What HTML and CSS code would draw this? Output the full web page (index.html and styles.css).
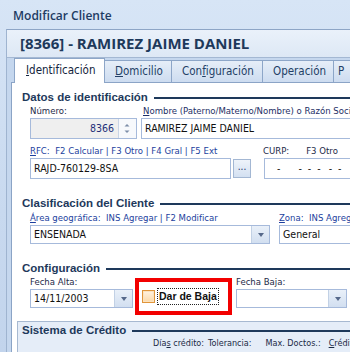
FILE: index.html
```html
<!DOCTYPE html>
<html lang="es">
<head>
    <meta charset="UTF-8">
    <title>Modificar Cliente</title>
    <link rel="stylesheet" href="styles.css">
</head>
<body>

<div class="caption">Modificar Cliente</div>

<div class="frame">
    <div class="record">[8366] - RAMIREZ JAIME DANIEL</div>

    <div class="sheet">
        <div class="tabs">
            <div class="tab active tab-id"><u>I</u>dentificación</div>
            <div class="tab tab-dom"><u>D</u>omicilio</div>
            <div class="tab tab-conf">Con<u>f</u>iguración</div>
            <div class="tab tab-op">Operación</div>
            <div class="tab tab-p">P</div>
        </div>

        <div class="page">
            <!-- Datos de identificacion -->
            <div class="group">
                <div class="group-title">Datos de identificación</div>
                <div class="group-body">
                    <div class="row">
                        <div class="field f-num">
                            <div class="label">Número:</div>
                            <div class="spin">
                                <div class="spin-value">8366</div>
                                <div class="spin-btn">
                                    <svg width="16" height="19" viewBox="0 0 16 19">
                                        <path d="M5.5 7.5 L8 5 L10.5 7.5 Z" fill="#7d8ea8"/>
                                        <path d="M5.5 11.5 L8 14 L10.5 11.5 Z" fill="#7d8ea8"/>
                                    </svg>
                                </div>
                            </div>
                        </div>
                        <div class="field f-name">
                            <div class="label navy"><u>N</u>ombre (Paterno/Materno/Nombre) o Razón Social</div>
                            <div class="edit">RAMIREZ JAIME DANIEL</div>
                        </div>
                    </div>
                    <div class="row row-next">
                        <div class="field f-rfc">
                            <div class="label link"><u>R</u>FC:&nbsp; F2 Calcular | F3 Otro | F4 Gral | F5 Ext</div>
                            <div class="edit">RAJD-760129-8SA</div>
                        </div>
                        <div class="dots">...</div>
                        <div class="field f-curp">
                            <div class="label"><span class="curp">CURP:</span>F3 Otro</div>
                            <div class="edit mask"><span>-</span><span>-</span><span>-</span><span>-</span><span>-</span><span>-</span></div>
                        </div>
                    </div>
                </div>
            </div>

            <!-- Clasificacion del cliente -->
            <div class="group group-next">
                <div class="group-title">Clasificación del Cliente</div>
                <div class="group-body">
                    <div class="row row-combo">
                        <div class="field f-area">
                            <div class="label link"><u>Á</u>rea geográfica:&nbsp; INS Agregar | F2 Modificar</div>
                            <div class="combo">
                                <div class="combo-text">ENSENADA</div>
                                <div class="combo-btn"></div>
                            </div>
                        </div>
                        <div class="field f-zona">
                            <div class="label link"><u>Z</u>ona:&nbsp; INS Agregar</div>
                            <div class="combo">
                                <div class="combo-text">General</div>
                                <div class="combo-btn"></div>
                            </div>
                        </div>
                    </div>
                </div>
            </div>

            <!-- Configuracion -->
            <div class="group group-next">
                <div class="group-title">Configuración</div>
                <div class="group-body">
                    <div class="row">
                        <div class="field f-alta">
                            <div class="label">Fecha Alta:</div>
                            <div class="combo">
                                <div class="combo-text">14/11/2003</div>
                                <div class="combo-btn"></div>
                            </div>
                        </div>
                        <div class="mark">
                            <span class="check"></span>
                            <span class="check-label">Dar de Baja</span>
                        </div>
                        <div class="field f-baja">
                            <div class="label">Fecha Baja:</div>
                            <div class="combo">
                                <div class="combo-text"></div>
                                <div class="combo-btn"></div>
                            </div>
                        </div>
                    </div>
                </div>
            </div>

            <!-- Sistema de credito -->
            <div class="panel">
                <div class="group-title">Sistema de Crédito</div>
                <div class="panel-labels">
                    <span class="pl-dias">Día<u>s</u> crédito:</span>
                    <span class="pl-tol">Tolerancia:</span>
                    <span class="pl-max">Max. Doctos.:</span>
                    <span><u>C</u>rédito</span>
                </div>
            </div>
        </div>
    </div>
</div>

</body>
</html>
```

FILE: styles.css
```css
html, body {
    margin: 0;
    width: 350px;
    height: 352px;
    overflow: hidden;
}
body {
    font-family: "DejaVu Sans Condensed", "Liberation Sans", sans-serif;
    font-size: 9.5px;
    color: #1b2a45;
    background: linear-gradient(#d7e5f6, #c8d9ef 60%, #c2d4ec);
}
u {
    text-underline-offset: 1px;
}
.caption {
    height: 29px;
    box-sizing: border-box;
    padding: 9px 0 0 13px;
    font-family: "Open Sans", sans-serif;
    font-weight: 600;
    font-size: 12px;
    line-height: 14px;
    color: #1d3b63;
}
.frame {
    width: 420px;
    height: 330px;
    margin-left: 6px;
    border-left: 1px solid #9fb4d0;
    border-top: 1px solid #8da5c6;
    background: #c5d7ee;
}
.record {
    height: 27px;
    padding-left: 13px;
    border-bottom: 1px solid #a4b8d3;
    background: linear-gradient(#eaf1fa, #dde8f5);
    font-family: "Open Sans", sans-serif;
    font-weight: 700;
    font-size: 15px;
    line-height: 27px;
    color: #1e395b;
}
.sheet {
    margin-left: 4px;
}

/* tabs */
.tabs {
    display: flex;
    align-items: flex-end;
    height: 24px;
    padding-left: 3px;
    border-bottom: 1px solid #8ba4c6;
}
.tab {
    box-sizing: border-box;
    height: 22px;
    margin-left: -1px;
    padding-left: 10px;
    border: 1px solid #8da6c8;
    border-bottom: none;
    background: linear-gradient(#e6eef8, #cddcf0);
    color: #233f66;
    font-size: 11.5px;
    line-height: 20px;
    white-space: nowrap;
}
.tab.active {
    height: 25px;
    margin-left: 0;
    margin-bottom: -1px;
    padding-left: 11px;
    background: #fff;
    color: #14243d;
    line-height: 23px;
}
.tab-id { width: 91px; }
.tab-dom { width: 68px; }
.tab-conf { width: 92px; }
.tab-op { width: 72px; }
.tab-p { width: 40px; padding-left: 4px; }

/* page */
.page {
    height: 270px;
    padding: 7px 0 0 5px;
    border-left: 1px solid #8ba4c6;
    background: #fff;
}
.group {
    padding-left: 5px;
}
.group-next {
    margin-top: 17px;
}
.group-title {
    display: flex;
    align-items: center;
    gap: 6px;
    height: 14px;
    font-family: "Liberation Sans", sans-serif;
    font-weight: bold;
    font-size: 11.5px;
    color: #1e395b;
    white-space: nowrap;
}
.group-title::after {
    content: "";
    flex: 1;
    height: 2px;
    margin-top: 1px;
    background: #1e395b;
}
.group-body {
    padding-left: 8px;
}
.row {
    display: flex;
    align-items: flex-start;
    margin-top: 1px;
}
.row-next {
    margin-top: 6px;
}
.row-combo {
    margin-top: 2px;
}
.field {
    display: flex;
    flex-direction: column;
}
.label {
    height: 13px;
    line-height: 12px;
    white-space: nowrap;
    color: #1d2a48;
}
.label.link {
    color: #1c3f9e;
}
.label.navy {
    color: #1d2f66;
}

/* inputs */
.edit {
    box-sizing: border-box;
    height: 21px;
    padding: 0 3px;
    border: 1px solid #a6badb;
    background: #fff;
    font-size: 10.5px;
    line-height: 19px;
    color: #111;
    white-space: nowrap;
}
.spin {
    box-sizing: border-box;
    display: flex;
    height: 21px;
    border: 1px solid #a6badb;
}
.spin-value {
    flex: 1;
    padding-right: 4px;
    border-right: 1px solid #c9d5e6;
    background: #efefef;
    text-align: right;
    font-size: 10.5px;
    line-height: 19px;
    color: #232e78;
}
.spin-btn {
    width: 17px;
    background: #f7f9fc;
}
.spin-btn svg {
    display: block;
}
.f-num { width: 107px; }
.f-name { width: 260px; margin-left: 4px; }
.f-name .label { padding-left: 2px; }
.f-rfc { width: 201px; }
.dots {
    box-sizing: border-box;
    align-self: flex-end;
    width: 18px;
    height: 19px;
    margin: 0 0 1px 2px;
    border: 1px solid #a3b7d3;
    background: linear-gradient(#eef3fa, #d3e0f1);
    text-align: center;
    font-size: 10px;
    line-height: 14px;
    color: #1d2f66;
}
.f-curp { width: 120px; margin-left: 12px; }
.curp { margin-right: 17px; }
.f-curp .edit { margin-left: 1px; }
.mask {
    display: flex;
    padding-left: 12px;
}
.mask span:nth-child(2) { margin-left: 18px; }
.mask span:nth-child(3),
.mask span:nth-child(4) { margin-left: 6px; }
.mask span:nth-child(5) { margin-left: 8px; }
.mask span:nth-child(6) { margin-left: 6px; }

/* combos */
.combo {
    box-sizing: border-box;
    display: flex;
    height: 19px;
    border: 1px solid #a6badb;
    background: #fff;
}
.combo-text {
    flex: 1;
    padding-left: 3px;
    font-size: 10.5px;
    line-height: 17px;
    color: #111;
    white-space: nowrap;
}
.combo-btn {
    display: flex;
    align-items: center;
    justify-content: center;
    width: 17px;
    border-left: 1px solid #c2d1e5;
    background: linear-gradient(#e9f0f9, #d2dff0);
}
.combo-btn::before {
    content: "";
    border-top: 4px solid #56698a;
    border-left: 3.5px solid transparent;
    border-right: 3.5px solid transparent;
}
.f-area { width: 240px; }
.f-zona { width: 110px; margin-left: 9px; }
.f-alta { width: 103px; }
.f-baja { width: 111px; margin-left: 4px; }

/* marked checkbox */
.mark {
    box-sizing: border-box;
    display: flex;
    align-items: center;
    width: 97px;
    height: 37px;
    margin: 2px 0 0 2px;
    padding-left: 3px;
    border: 4px solid #f20000;
}
.check {
    box-sizing: border-box;
    width: 13px;
    height: 13px;
    border: 1px solid #e0953a;
    background: linear-gradient(#fff3e2, #fcd9a8);
    box-shadow: inset 0 0 0 1px #fbe3bf;
}
.check-label {
    margin-left: 2px;
    padding: 0 1px;
    border: 1px dotted #222;
    font-family: "Liberation Sans", sans-serif;
    font-weight: bold;
    font-size: 10.5px;
    line-height: 15px;
    color: #111;
}

/* credit panel */
.panel {
    height: 40px;
    margin-top: 6px;
    padding: 1px 0 0 4px;
    border: 1px solid #a7b9d1;
    border-right: none;
    background: #e5edf8;
}
.panel-labels {
    display: flex;
    height: 11px;
    margin-top: 1px;
    padding-left: 131px;
    font-size: 9px;
    line-height: 11px;
    white-space: nowrap;
}
.pl-dias { margin-right: 4px; }
.pl-tol { margin-right: 14px; }
.pl-max { margin-right: 8px; }
```
